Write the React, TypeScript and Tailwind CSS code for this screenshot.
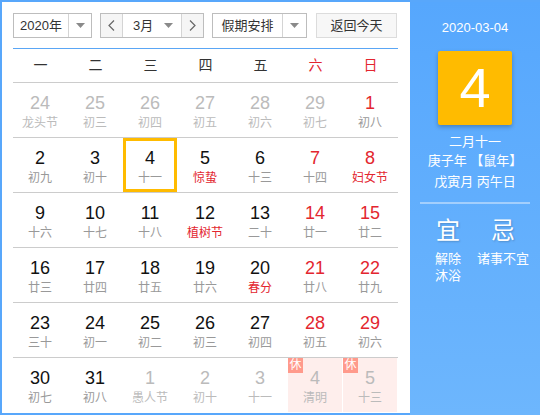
import React from "react";

type Day = {
  n: number;
  lunar: string;
  other?: boolean;
  weekend?: boolean;
  fest?: boolean;
  today?: boolean;
  rest?: boolean;
};

const weeks: Day[][] = [
  [
    { n: 24, lunar: "龙头节", other: true },
    { n: 25, lunar: "初三", other: true },
    { n: 26, lunar: "初四", other: true },
    { n: 27, lunar: "初五", other: true },
    { n: 28, lunar: "初六", other: true },
    { n: 29, lunar: "初七", other: true },
    { n: 1, lunar: "初八", weekend: true },
  ],
  [
    { n: 2, lunar: "初九" },
    { n: 3, lunar: "初十" },
    { n: 4, lunar: "十一", today: true },
    { n: 5, lunar: "惊蛰", fest: true },
    { n: 6, lunar: "十三" },
    { n: 7, lunar: "十四", weekend: true },
    { n: 8, lunar: "妇女节", weekend: true, fest: true },
  ],
  [
    { n: 9, lunar: "十六" },
    { n: 10, lunar: "十七" },
    { n: 11, lunar: "十八" },
    { n: 12, lunar: "植树节", fest: true },
    { n: 13, lunar: "二十" },
    { n: 14, lunar: "廿一", weekend: true },
    { n: 15, lunar: "廿二", weekend: true },
  ],
  [
    { n: 16, lunar: "廿三" },
    { n: 17, lunar: "廿四" },
    { n: 18, lunar: "廿五" },
    { n: 19, lunar: "廿六" },
    { n: 20, lunar: "春分", fest: true },
    { n: 21, lunar: "廿八", weekend: true },
    { n: 22, lunar: "廿九", weekend: true },
  ],
  [
    { n: 23, lunar: "三十" },
    { n: 24, lunar: "初一" },
    { n: 25, lunar: "初二" },
    { n: 26, lunar: "初三" },
    { n: 27, lunar: "初四" },
    { n: 28, lunar: "初五", weekend: true },
    { n: 29, lunar: "初六", weekend: true },
  ],
  [
    { n: 30, lunar: "初七" },
    { n: 31, lunar: "初八" },
    { n: 1, lunar: "愚人节", other: true },
    { n: 2, lunar: "初十", other: true },
    { n: 3, lunar: "十一", other: true },
    { n: 4, lunar: "清明", other: true, rest: true },
    { n: 5, lunar: "十三", other: true, rest: true },
  ],
];

const weekdays = ["一", "二", "三", "四", "五", "六", "日"];

function Caret() {
  return (
    <svg width="9" height="5" viewBox="0 0 9 5">
      <path d="M0 0 L9 0 L4.5 5 Z" fill="#8a8a8a" />
    </svg>
  );
}

function Cell({ d }: { d: Day }) {
  let numColor = "text-[#111]";
  if (d.other) numColor = "text-[#bbbbbb]";
  else if (d.weekend) numColor = "text-[#e3262f]";

  let lunarColor = "text-[#999]";
  if (d.other) lunarColor = "text-[#bbbbbb]";
  else if (d.fest) lunarColor = "text-[#e3262f]";

  return (
    <div className="relative h-full">
      <div
        className={`relative h-full mr-px flex flex-col items-center ${
          d.rest ? "bg-[#feeeec]" : ""
        } ${d.today ? "border-[3px] border-[#ffbb00] pt-[7px]" : "pt-[10px]"}`}
      >
        {d.rest && (
          <div className="absolute left-0 top-0 w-[15px] h-[15px] bg-[#ff9a8c] text-white text-[12px] leading-[15px] text-center">
            休
          </div>
        )}
        <div className={`text-[18px] leading-[20px] ${numColor}`}>{d.n}</div>
        <div className={`text-[12px] leading-[16px] mt-[2px] ${lunarColor}`}>{d.lunar}</div>
      </div>
    </div>
  );
}

export default function App() {
  return (
    <div
      className="w-[540px] h-[415px] bg-[#58a7fb] pt-[2px] pl-[2px] flex"
      style={{ fontFamily: '"Liberation Sans", "Noto Sans CJK SC", sans-serif' }}
    >
      <div className="w-[408px] h-[411px] bg-white pl-[11px] pr-[12px] pt-[11px]">
        {/* controls */}
        <div className="flex h-[25px] text-[13px] text-[#333]">
          <div className="w-[79px] flex border border-[#bdbdbd]">
            <div className="flex-1 flex items-center justify-center">2020年</div>
            <div className="w-[23px] border-l border-[#d4d4d4] flex items-center justify-center">
              <Caret />
            </div>
          </div>
          <div className="ml-[8px] w-[104px] flex border border-[#bdbdbd]">
            <div className="w-[22px] bg-[#f5f5f5] border-r border-[#d4d4d4] flex items-center justify-center text-[#666]">
              <svg width="7" height="11" viewBox="0 0 7 11">
                <path d="M6 0.5 L1 5.5 L6 10.5" stroke="#666" fill="none" strokeWidth="1.2" />
              </svg>
            </div>
            <div className="flex-1 flex items-center pl-[10px] pr-[8px] justify-between">
              <span>3月</span>
              <Caret />
            </div>
            <div className="w-[22px] bg-[#f5f5f5] border-l border-[#d4d4d4] flex items-center justify-center">
              <svg width="7" height="11" viewBox="0 0 7 11">
                <path d="M1 0.5 L6 5.5 L1 10.5" stroke="#666" fill="none" strokeWidth="1.2" />
              </svg>
            </div>
          </div>
          <div className="ml-[8px] w-[95px] flex border border-[#bdbdbd]">
            <div className="flex-1 flex items-center justify-center">假期安排</div>
            <div className="w-[24px] border-l border-[#d4d4d4] flex items-center justify-center">
              <Caret />
            </div>
          </div>
          <div className="ml-[9px] w-[81px] flex items-center justify-center border border-[#dcdcdc] bg-[#f7f7f7]">
            返回今天
          </div>
        </div>

        <div className="mt-[10px] border-t border-[#5aa6f5]" />

        {/* weekdays */}
        <div className="grid grid-cols-7 h-[34px] border-b border-[#cccccc] text-[14px]">
          {weekdays.map((w, i) => (
            <div
              key={w}
              className={`flex items-center justify-center ${i >= 5 ? "text-[#e3262f]" : "text-[#333]"}`}
            >
              {w}
            </div>
          ))}
        </div>

        {/* days */}
        {weeks.map((wk, ri) => (
          <div
            key={ri}
            className={`grid grid-cols-7 ${ri < 5 ? "h-[55px] border-b border-[#cccccc]" : "h-[54px]"}`}
          >
            {wk.map((d, ci) => (
              <Cell key={ci} d={d} />
            ))}
          </div>
        ))}
      </div>

      {/* right panel */}
      <div className="flex-1 h-[413px] bg-gradient-to-b from-[#56a7fd] to-[#6db6fd] text-white flex flex-col items-center">
        <div className="mt-[17px] text-[13px] leading-[18px]">2020-03-04</div>
        <div className="mt-[14px] w-[74px] h-[74px] bg-[#ffbb00] rounded-[2px] shadow-[0_2px_4px_rgba(0,0,0,0.25)] flex items-center justify-center text-[56px] leading-none">
          4
        </div>
        <div className="mt-[8px] text-[13px] leading-[18px]">二月十一</div>
        <div className="text-[13px] leading-[20px]">庚子年 【鼠年】</div>
        <div className="text-[13px] leading-[21px]">戊寅月 丙午日</div>
        <div className="mt-[10px] w-[110px] border-t-2 border-[#a3cffd]" />
        <div className="mt-[13px] w-[110px] flex">
          <div className="w-[56px] flex flex-col items-center">
            <div className="text-[24px] leading-[28px] [text-shadow:1px_1px_2px_rgba(0,0,0,0.2)]">宜</div>
            <div className="mt-[5px] text-[13px] leading-[17px] text-center w-[28px]">解除 沐浴</div>
          </div>
          <div className="flex-1 flex flex-col items-center">
            <div className="text-[24px] leading-[28px] [text-shadow:1px_1px_2px_rgba(0,0,0,0.2)]">忌</div>
            <div className="mt-[5px] text-[13px] leading-[17px]">诸事不宜</div>
          </div>
        </div>
      </div>
    </div>
  );
}
